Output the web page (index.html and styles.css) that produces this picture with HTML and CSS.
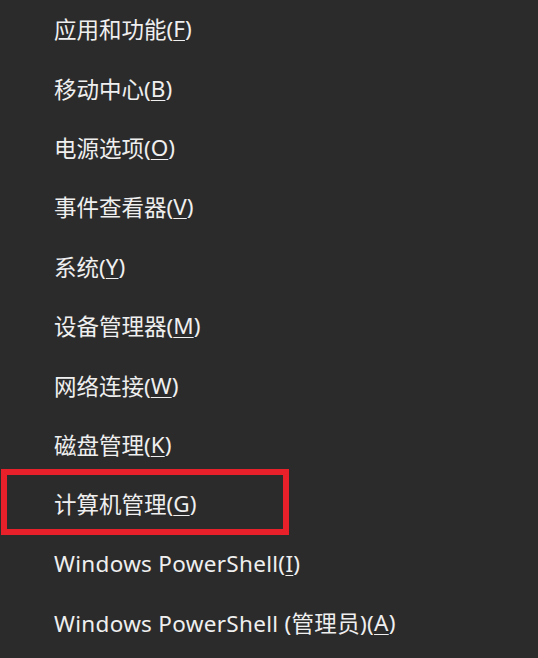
FILE: index.html
```html
<!DOCTYPE html>
<html>
<head>
    <title>快速链接菜单</title>
    <link rel="stylesheet" href="styles.css">
</head>
<body>
    <ul class="menu">
        <li class="menu-item">应用和功能(<u>F</u>)</li>
        <li class="menu-item">移动中心(<u>B</u>)</li>
        <li class="menu-item">电源选项(<u>O</u>)</li>
        <li class="menu-item">事件查看器(<u>V</u>)</li>
        <li class="menu-item">系统(<u>Y</u>)</li>
        <li class="menu-item">设备管理器(<u>M</u>)</li>
        <li class="menu-item">网络连接(<u>W</u>)</li>
        <li class="menu-item">磁盘管理(<u>K</u>)</li>
        <li class="menu-item highlighted">计算机管理(<u>G</u>)</li>
        <li class="menu-item latin">Windows PowerShell(<u>I</u>)</li>
        <li class="menu-item latin">Windows PowerShell (管理员)(<u>A</u>)</li>
    </ul>
</body>
</html>
```

FILE: styles.css
```css
body {
    margin: 0;
    background: #2b2b2b;
    font-family: "Noto Sans", "Noto Sans CJK SC", sans-serif;
    color: #efefef;
    height: 658px;
    overflow: hidden;
}
.menu {
    list-style: none;
    margin: -1px 0 0 0;
    padding: 0;
}
.menu-item {
    height: 59.4px;
    display: flex;
    align-items: center;
    padding-left: 54px;
    font-size: 22.5px;
    position: relative;
}
.menu-item.latin {
    letter-spacing: 0.3px;
}
.menu-item u {
    text-underline-offset: 3px;
    text-decoration-thickness: 1px;
}
.highlighted::after {
    content: "";
    position: absolute;
    left: 1px;
    top: -5px;
    width: 276px;
    height: 54px;
    border: 6px solid #e8202a;
}
```
